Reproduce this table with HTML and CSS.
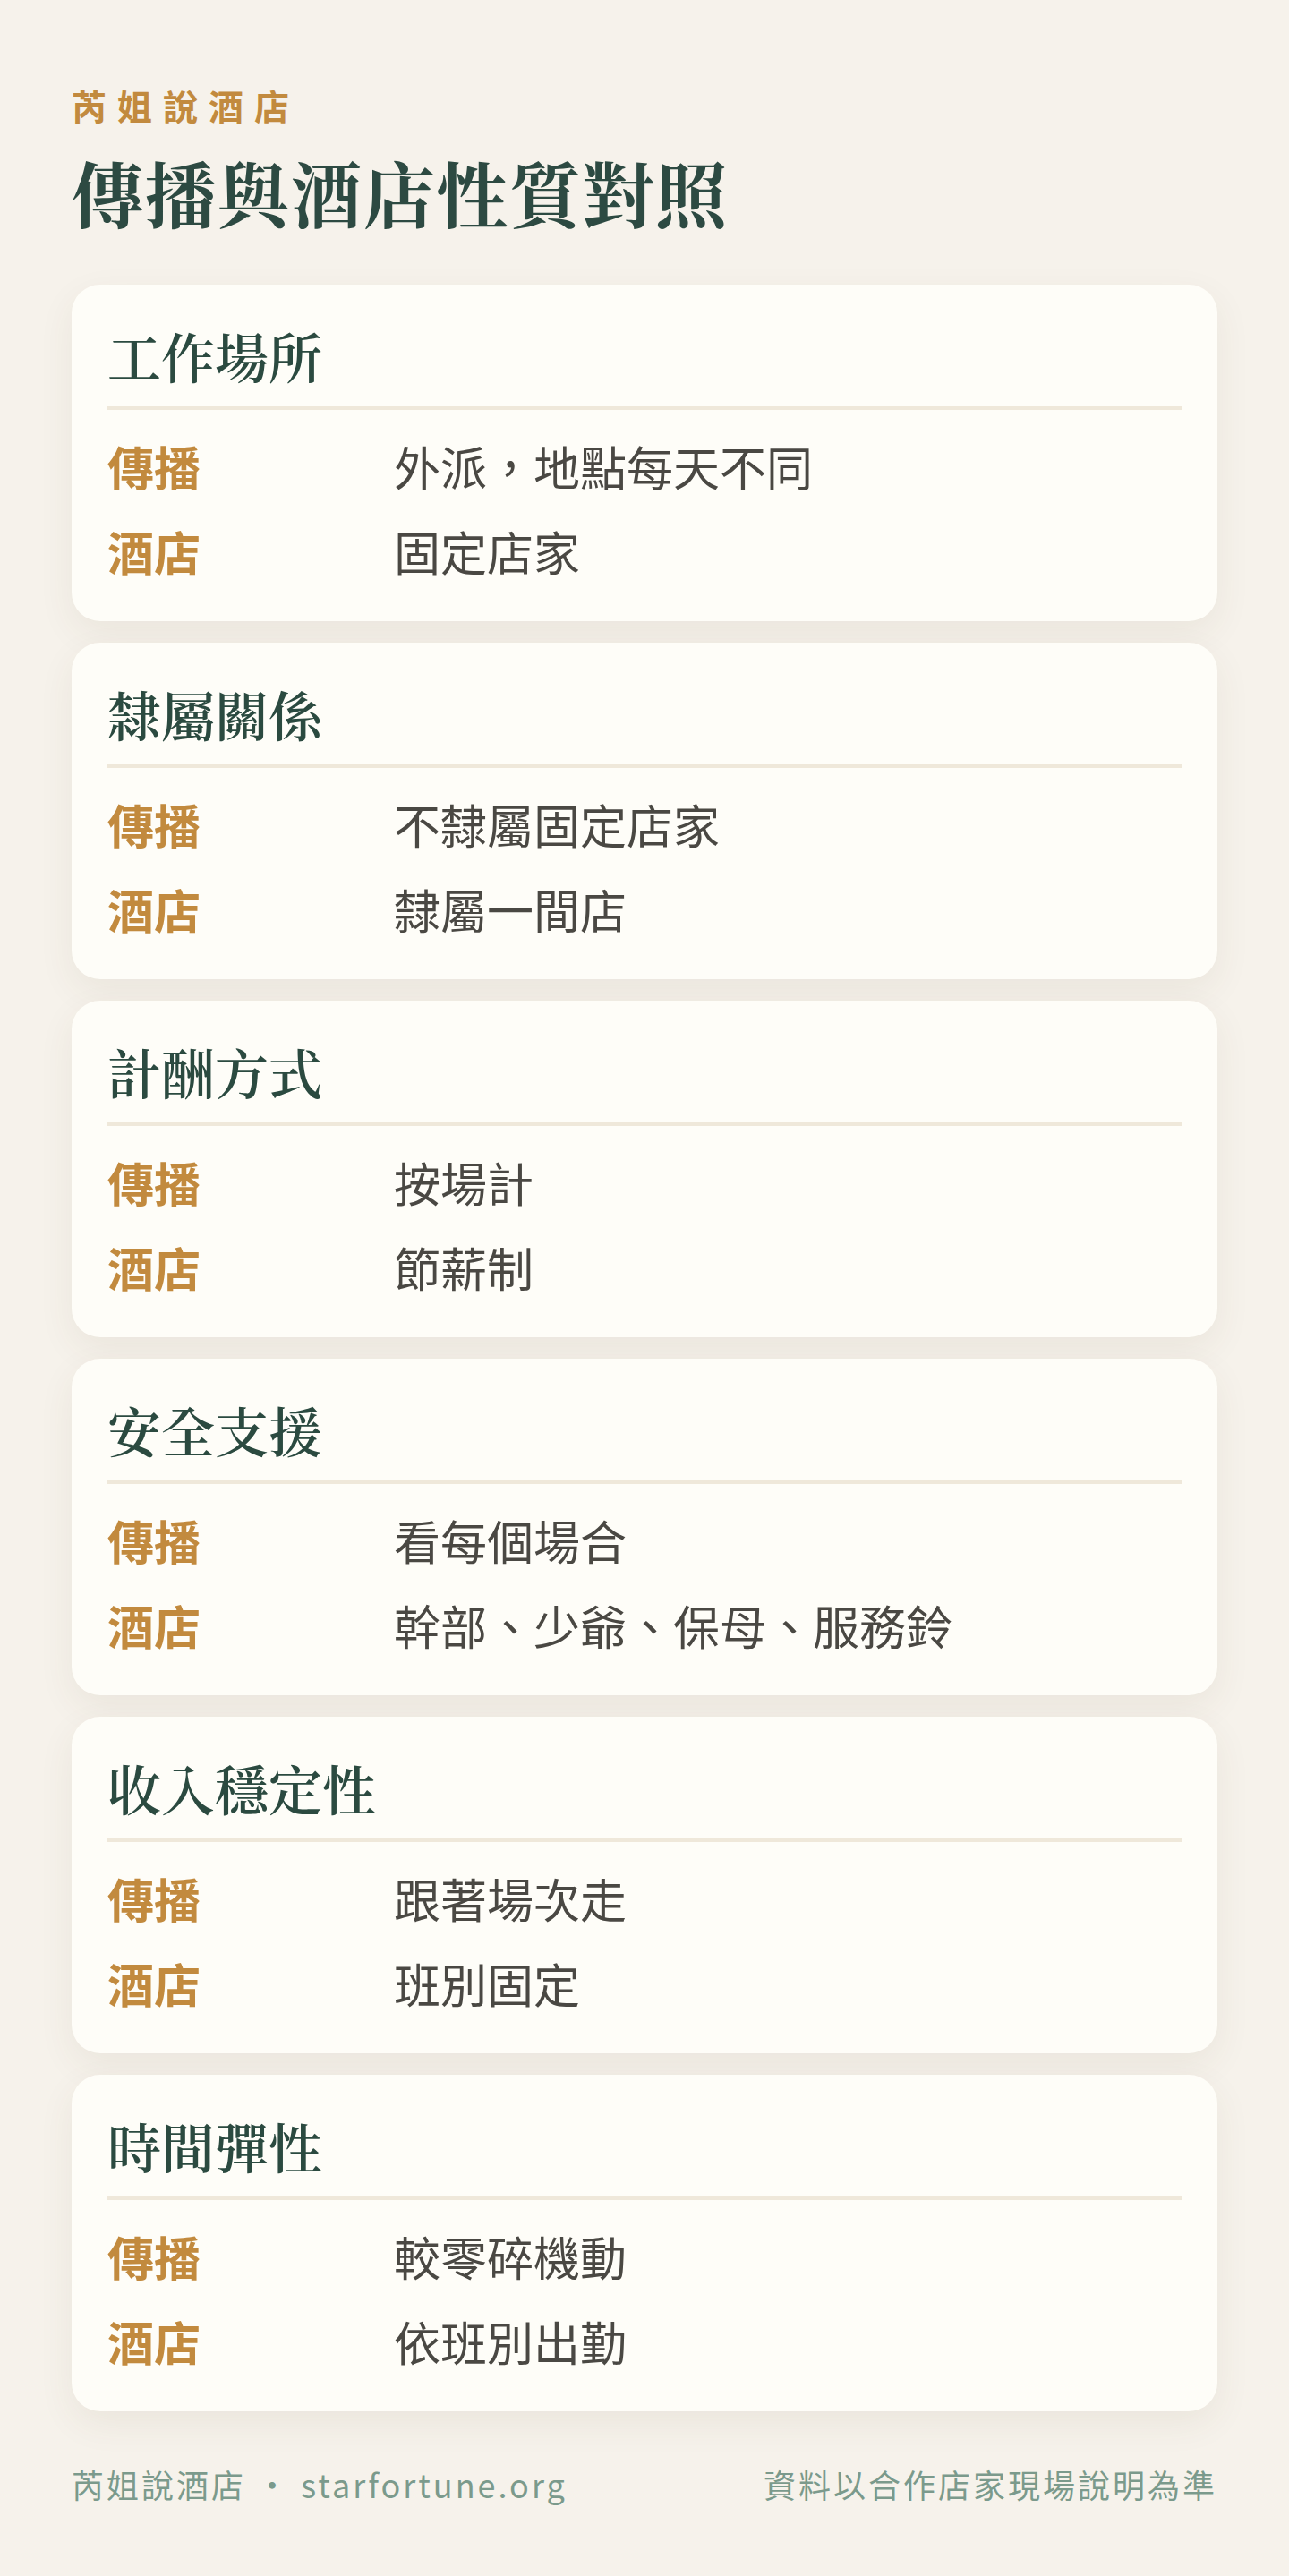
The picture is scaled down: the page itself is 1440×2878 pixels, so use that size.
FILE: index.html
```html
<!DOCTYPE html>
<html lang="zh-Hant">
<head>
<meta charset="utf-8">
<title>傳播與酒店性質對照</title>
<link rel="stylesheet" href="styles.css">
</head>
<body>
<main class="page">
  <header class="masthead">
    <div class="brand">芮姐說酒店</div>
    <h1 class="title">傳播與酒店性質對照</h1>
  </header>

  <section class="cards">
    <article class="card">
      <h2 class="card-title">工作場所</h2>
      <dl class="rows">
        <div class="row"><dt>傳播</dt><dd>外派，地點每天不同</dd></div>
        <div class="row"><dt>酒店</dt><dd>固定店家</dd></div>
      </dl>
    </article>
    <article class="card">
      <h2 class="card-title">隸屬關係</h2>
      <dl class="rows">
        <div class="row"><dt>傳播</dt><dd>不隸屬固定店家</dd></div>
        <div class="row"><dt>酒店</dt><dd>隸屬一間店</dd></div>
      </dl>
    </article>
    <article class="card">
      <h2 class="card-title">計酬方式</h2>
      <dl class="rows">
        <div class="row"><dt>傳播</dt><dd>按場計</dd></div>
        <div class="row"><dt>酒店</dt><dd>節薪制</dd></div>
      </dl>
    </article>
    <article class="card">
      <h2 class="card-title">安全支援</h2>
      <dl class="rows">
        <div class="row"><dt>傳播</dt><dd>看每個場合</dd></div>
        <div class="row"><dt>酒店</dt><dd>幹部、少爺、保母、服務鈴</dd></div>
      </dl>
    </article>
    <article class="card">
      <h2 class="card-title">收入穩定性</h2>
      <dl class="rows">
        <div class="row"><dt>傳播</dt><dd>跟著場次走</dd></div>
        <div class="row"><dt>酒店</dt><dd>班別固定</dd></div>
      </dl>
    </article>
    <article class="card">
      <h2 class="card-title">時間彈性</h2>
      <dl class="rows">
        <div class="row"><dt>傳播</dt><dd>較零碎機動</dd></div>
        <div class="row"><dt>酒店</dt><dd>依班別出勤</dd></div>
      </dl>
    </article>
  </section>

  <footer class="footer">
    <div class="footer-left">芮姐說酒店 ・ starfortune.org</div>
    <div class="footer-right">資料以合作店家現場說明為準</div>
  </footer>
</main>
</body>
</html>
```

FILE: styles.css
```css
* {
  box-sizing: border-box;
}

html, body {
  margin: 0;
  padding: 0;
}

body {
  background: #f6f2eb;
  font-family: "Noto Sans CJK TC", "Noto Sans CJK SC", "Noto Sans", sans-serif;
  color: #4a4843;
}

.page {
  width: 1440px;
  min-height: 2878px;
  padding: 89px 80px 60px;
}

.masthead {
  display: flex;
  flex-direction: column;
}

.brand {
  font-size: 39px;
  line-height: 56px;
  font-weight: 700;
  letter-spacing: 12px;
  color: #c28a3e;
}

.title {
  margin: 19px 0 0;
  font-family: "Noto Serif CJK TC", "Noto Serif TC", "Source Han Serif TC", "AR PL UMing TW", "Noto Sans CJK TC", serif;
  font-size: 80px;
  line-height: 100px;
  font-weight: 700;
  letter-spacing: 1.5px;
  color: #2d4a42;
}

.cards {
  margin-top: 54px;
  display: flex;
  flex-direction: column;
  gap: 24px;
}

.card {
  background: #fefdf8;
  border-radius: 32px;
  padding: 40px 40px 39px;
  box-shadow: 0 14px 40px rgba(90, 70, 40, 0.07);
}

.card-title {
  margin: 0;
  padding-bottom: 18px;
  border-bottom: 4px solid #efe8da;
  font-family: "Noto Serif CJK TC", "Noto Serif TC", "Source Han Serif TC", "AR PL UMing TW", "Noto Sans CJK TC", serif;
  font-size: 60px;
  line-height: 78px;
  font-weight: 600;
  color: #2b4a40;
}

.rows {
  margin: 24px 0 0;
  display: flex;
  flex-direction: column;
  gap: 17px;
}

.row {
  display: grid;
  grid-template-columns: 320px 1fr;
  font-size: 52px;
  line-height: 78px;
}

.row dt {
  font-weight: 700;
  color: #c28a3e;
}

.row dd {
  margin: 0;
  color: #4a4843;
}

.footer {
  margin-top: 56px;
  display: flex;
  justify-content: space-between;
  align-items: center;
  font-size: 36px;
  line-height: 50px;
  letter-spacing: 3px;
  color: #7b9a8c;
}
```
